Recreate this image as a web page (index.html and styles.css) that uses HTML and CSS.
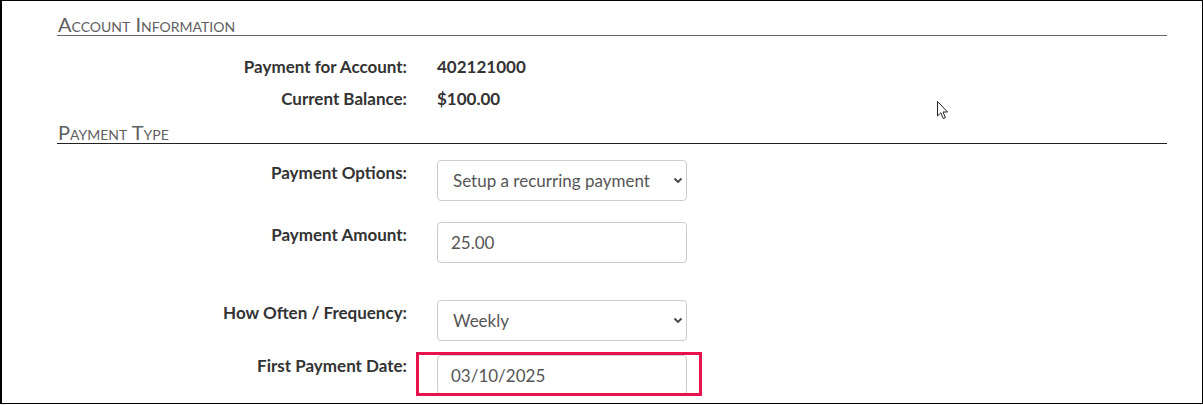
FILE: index.html
```html
<!DOCTYPE html>
<html>
<head>
<meta charset="utf-8">
<link rel="stylesheet" href="styles.css">
</head>
<body>
<div class="frame">
  <section class="section">
    <h2 class="heading heading-gray">Account Information</h2>
    <div class="info-row">
      <div class="label">Payment for Account:</div>
      <div class="value">402121000</div>
    </div>
    <div class="info-row">
      <div class="label">Current Balance:</div>
      <div class="value">$100.00</div>
    </div>
  </section>
  <section class="section">
    <h2 class="heading heading-dark">Payment Type</h2>
    <div class="form-row row-options">
      <div class="label">Payment Options:</div>
      <div class="control select">
        <span>Setup a recurring payment</span>
        <svg class="chev" width="10" height="7" viewBox="0 0 10 7"><path d="M1.5 1.5 L5 5 L8.5 1.5" fill="none" stroke="#444" stroke-width="1.8"/></svg>
      </div>
    </div>
    <div class="form-row row-amount">
      <div class="label">Payment Amount:</div>
      <div class="control input"><span>25.00</span></div>
    </div>
    <div class="form-row row-freq">
      <div class="label">How Often / Frequency:</div>
      <div class="control select">
        <span>Weekly</span>
        <svg class="chev" width="10" height="7" viewBox="0 0 10 7"><path d="M1.5 1.5 L5 5 L8.5 1.5" fill="none" stroke="#444" stroke-width="1.8"/></svg>
      </div>
    </div>
    <div class="form-row row-date">
      <div class="label">First Payment Date:</div>
      <div class="highlight">
        <div class="control input"><span>03/10/2025</span></div>
      </div>
    </div>
  </section>
  <svg class="cursor" width="14" height="21" viewBox="0 0 14 21"><path d="M1.5 1.5 L1.5 16 L4.8 12.8 L7.3 18.6 L9.4 17.7 L7 12 L11.6 12 Z" fill="#fff" stroke="#222" stroke-width="1" stroke-linejoin="miter"/></svg>
</div>
</body>
</html>
```
FILE: styles.css
```css
html, body {
  margin: 0;
  padding: 0;
  background: #fff;
}
body {
  font-family: Lato, "Open Sans", Arial, sans-serif;
  color: #333;
}
.frame {
  position: relative;
  box-sizing: border-box;
  width: 1203px;
  height: 404px;
  border: 1px solid #000;
  border-left-width: 2px;
  padding: 12px 35px 0 55px;
  overflow: hidden;
}
.section {
  width: 1110px;
}
.heading {
  margin: 0;
  font-size: 20px;
  line-height: 22px;
  font-weight: 400;
  font-variant: small-caps;
  color: #5f5f5f;
  padding-left: 1px;
}
.heading-gray {
  border-bottom: 1px solid #666;
}
.heading-dark {
  border-bottom: 1px solid #222;
  margin-top: 6px;
}
.label {
  width: 350px;
  text-align: right;
  font-weight: 700;
  font-size: 17px;
  line-height: 20px;
  color: #333;
  flex-shrink: 0;
}
.info-row {
  display: flex;
  gap: 30px;
  height: 32px;
  align-items: center;
}
.info-row:first-of-type {
  margin-top: 15px;
}
.value {
  font-weight: 700;
  font-size: 17px;
  line-height: 20px;
  color: #333;
}
.form-row {
  display: flex;
  gap: 30px;
  align-items: flex-start;
}
.form-row .label {
  padding-top: 3px;
}
.row-options { margin-top: 16px; }
.row-amount { margin-top: 21px; }
.row-freq { margin-top: 37px; }
.row-date { margin-top: 12px; }
.control {
  box-sizing: border-box;
  width: 250px;
  height: 41px;
  border: 1px solid #ccc;
  border-radius: 4px;
  display: flex;
  align-items: center;
  justify-content: space-between;
  font-size: 17px;
  color: #555;
  background: #fff;
}
.select {
  padding: 0 3px 0 15px;
}
.input {
  padding: 0 13px;
}
.row-date .input {
  height: 40px;
}
.highlight {
  margin-left: -21px;
  margin-top: -1px;
  padding: 0 12px 0 18px;
  border: 3px solid #e8134d;
  height: 38px;
  overflow: hidden;
}
.cursor {
  position: absolute;
  left: 934px;
  top: 99px;
}
```
